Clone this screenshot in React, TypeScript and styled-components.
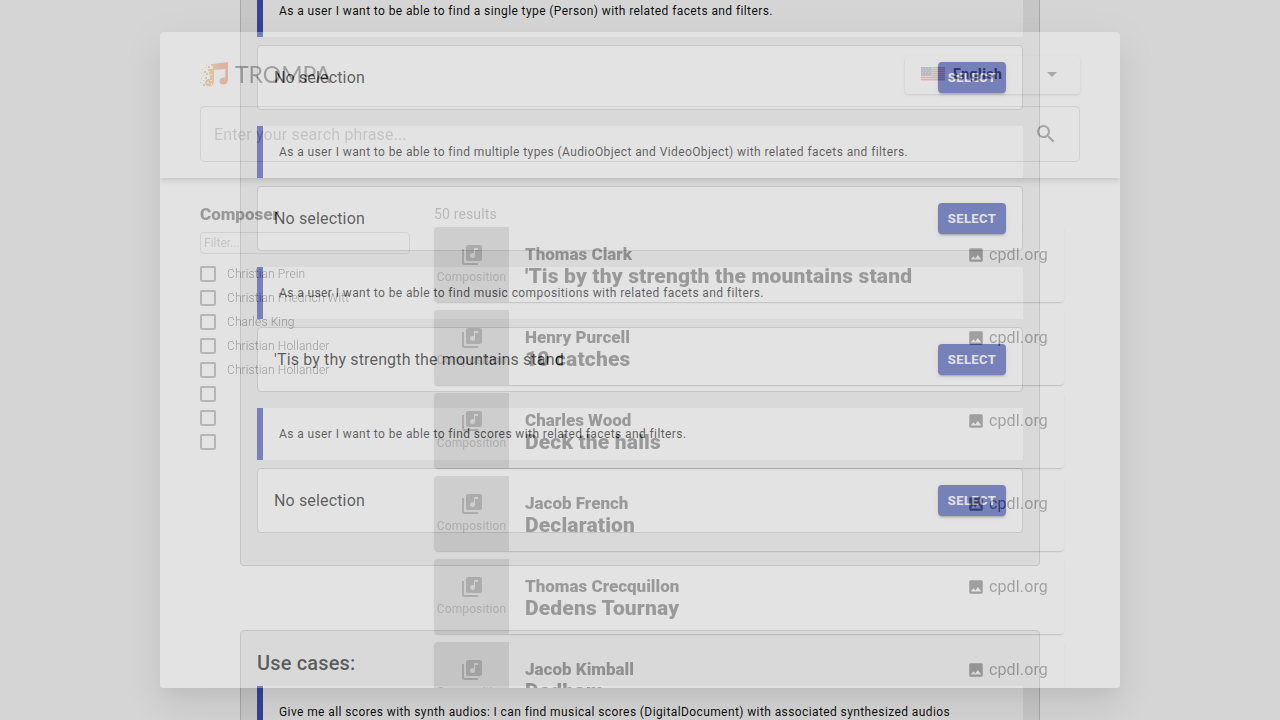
import React from 'react';
import styled, { createGlobalStyle } from 'styled-components';
import { MdArrowDropDown, MdImage, MdLibraryMusic, MdSearch } from 'react-icons/md';

const GlobalStyle = createGlobalStyle`
  *, *::before, *::after { box-sizing: border-box; }
  body {
    margin: 0;
    background: #fff;
    color: rgba(0, 0, 0, 0.95);
    font-family: Roboto, "Liberation Sans", sans-serif;
    overflow: hidden;
  }
  h1, h2, h3, p, ul { margin: 0; padding: 0; }
  ul { list-style: none; }
  button, input, select { font-family: inherit; }
`;

/* ---------- page behind the dialog ---------- */

const Page = styled.main`
  height: 100vh;
  overflow: hidden;
`;

const Column = styled.div`
  max-width: 800px;
  margin: 0 auto;
  display: flex;
  flex-direction: column;
  gap: 64px;
`;

const Panel = styled.section<{ $continued?: boolean }>`
  padding: ${(p) => (p.$continued ? '0 16px 32px' : '16px')};
  background: #eee;
  border: 1px solid #c8c8c8;
  border-top-width: ${(p) => (p.$continued ? '0' : '1px')};
  border-radius: ${(p) => (p.$continued ? '0 0 4px 4px' : '4px')};
`;

const PanelTitle = styled.h2`
  margin-bottom: 7px;
  font-size: 20px;
  font-weight: 500;
  line-height: 32px;
  letter-spacing: 0.0075em;
`;

const Stories = styled.div`
  display: flex;
  flex-direction: column;
  gap: 16px;
`;

const Story = styled.div`
  display: flex;
  flex-direction: column;
  gap: 8px;
`;

const StoryText = styled.p<{ $continued?: boolean }>`
  padding: ${(p) => (p.$continued ? '1px 16px 16px' : '16px')};
  background: #fff;
  border-left: 6px solid #3f51b5;
  font-size: 12px;
  line-height: 20px;
  letter-spacing: 0.03333em;
`;

const Selection = styled.div`
  display: flex;
  align-items: center;
  justify-content: space-between;
  padding: 16px;
  background: #fff;
  border: 1px solid #ccc;
  border-radius: 4px;
  font-size: 16px;
  line-height: 24px;
  letter-spacing: 0.00938em;
`;

const SelectButton = styled.button`
  width: 68px;
  height: 31px;
  padding: 0;
  border: 0;
  border-radius: 4px;
  background: #3f51b5;
  color: #fff;
  font-size: 13px;
  font-weight: 700;
  line-height: 22px;
  letter-spacing: 0.02857em;
  text-align: center;
  box-shadow: 0 3px 1px -2px rgba(0, 0, 0, 0.2), 0 2px 2px 0 rgba(0, 0, 0, 0.14),
    0 1px 5px 0 rgba(0, 0, 0, 0.12);
`;

/* ---------- dialog, part way through its fade-in ---------- */

const fade = 0.33;

const Backdrop = styled.div`
  position: fixed;
  inset: 0;
  background: rgba(0, 0, 0, 0.5);
  opacity: ${fade};
`;

const DialogLayer = styled.div`
  position: fixed;
  inset: 0;
  display: flex;
  justify-content: center;
  padding: 32px;
  opacity: ${fade};
`;

const Dialog = styled.div`
  flex: 1;
  max-width: 960px;
  display: flex;
  flex-direction: column;
  overflow: hidden;
  background: #fff;
  border-radius: 4px;
  color: rgba(0, 0, 0, 0.87);
  box-shadow: 0 11px 15px -7px rgba(0, 0, 0, 0.2), 0 24px 38px 3px rgba(0, 0, 0, 0.14),
    0 9px 46px 8px rgba(0, 0, 0, 0.12);
`;

const DialogHeader = styled.header`
  flex: none;
  z-index: 1;
  display: flex;
  flex-direction: column;
  gap: 12px;
  padding: 24px 40px 16px;
  background: #fff;
  box-shadow: 0 2px 4px -1px rgba(0, 0, 0, 0.2), 0 4px 5px 0 rgba(0, 0, 0, 0.14),
    0 1px 10px 0 rgba(0, 0, 0, 0.12);
`;

const HeaderRow = styled.div`
  display: flex;
  align-items: center;
  justify-content: space-between;
`;

const Brand = styled.h1`
  display: flex;
  align-items: center;
  gap: 5px;
  padding-bottom: 2px;
  font-family: Lato, sans-serif;
  font-size: 23px;
  font-weight: 400;
  line-height: 26px;
  color: #333;
`;

const LanguageField = styled.label`
  display: flex;
  align-items: center;
  gap: 8px;
  width: 175px;
  height: 38px;
  padding: 0 16px 2px;
  border-radius: 4px;
  box-shadow: 0 1px 3px rgba(0, 0, 0, 0.3);
`;

const LanguageSelect = styled.select`
  flex: 1;
  min-width: 0;
  padding: 0;
  border: 0;
  appearance: none;
  background: transparent;
  color: inherit;
  font-size: 14px;
  font-weight: 900;
  letter-spacing: 0.02857em;
`;

const CaretIcon = styled(MdArrowDropDown)`
  color: rgba(0, 0, 0, 0.7);
  font-size: 24px;
`;

const SearchBox = styled.div`
  display: flex;
  align-items: center;
  height: 56px;
  padding: 0 21px 0 13px;
  border: 1px solid rgba(0, 0, 0, 0.23);
  border-radius: 4px;
`;

const SearchInput = styled.input`
  flex: 1;
  min-width: 0;
  padding: 0;
  border: 0;
  background: transparent;
  font-size: 16px;
  letter-spacing: 0.00938em;
  &::placeholder { color: rgba(0, 0, 0, 0.38); opacity: 1; }
`;

const IconButton = styled.button`
  display: flex;
  padding: 0;
  border: 0;
  background: transparent;
  color: rgba(0, 0, 0, 0.75);
  font-size: 24px;
`;

const DialogBody = styled.div`
  flex: 1;
  min-height: 0;
  overflow: hidden;
  display: flex;
  align-items: flex-start;
  gap: 24px;
  padding: 24px 56px 0 40px;
`;

const Facet = styled.aside`
  flex: none;
  width: 210px;
`;

const FacetTitle = styled.h2`
  margin-bottom: 6px;
  font-size: 17px;
  font-weight: 900;
  line-height: 24px;
`;

const FacetFilter = styled.input`
  display: block;
  width: 100%;
  height: 22px;
  margin-bottom: 8px;
  padding: 0 3px;
  border: 1px solid rgba(0, 0, 0, 0.23);
  border-radius: 4px;
  background: transparent;
  font-size: 12px;
  &::placeholder { color: rgba(0, 0, 0, 0.38); opacity: 1; }
`;

const FacetOption = styled.label`
  display: flex;
  align-items: center;
  gap: 11px;
  height: 24px;
  font-size: 12px;
  font-weight: 300;
  letter-spacing: 0.00938em;
`;

const Checkbox = styled.input`
  appearance: none;
  width: 16px;
  height: 16px;
  margin: 0;
  border: 2px solid rgba(0, 0, 0, 0.54);
  border-radius: 2px;
`;

const Results = styled.section`
  flex: 1;
  min-width: 0;
`;

const ResultCount = styled.p`
  height: 25px;
  color: rgba(0, 0, 0, 0.54);
  font-size: 14px;
  line-height: 24px;
  letter-spacing: 0.01em;
`;

const ResultList = styled.ul`
  display: flex;
  flex-direction: column;
  gap: 8px;
`;

const ResultCard = styled.li`
  display: flex;
  height: 75px;
  overflow: hidden;
  border-radius: 4px;
  box-shadow: 0 2px 1px -1px rgba(0, 0, 0, 0.2), 0 1px 1px 0 rgba(0, 0, 0, 0.14),
    0 1px 3px 0 rgba(0, 0, 0, 0.12);
`;

const ResultKind = styled.div`
  flex: none;
  width: 75px;
  display: flex;
  flex-direction: column;
  align-items: center;
  justify-content: center;
  background: rgba(0, 0, 0, 0.25);
  color: rgba(0, 0, 0, 0.54);
  font-size: 12px;
  line-height: 20px;
  letter-spacing: 0.01em;
`;

const ResultText = styled.div`
  flex: 1;
  min-width: 0;
  padding: 16px;
`;

const Creator = styled.p`
  font-size: 17px;
  font-weight: 900;
  line-height: 22px;
`;

const WorkTitle = styled.h3`
  font-size: 21px;
  font-weight: 900;
  line-height: 22px;
  letter-spacing: 0.0075em;
`;

const Source = styled.a`
  display: flex;
  align-items: center;
  gap: 4px;
  height: 24px;
  margin: 16px 16px 0 0;
  color: rgba(0, 0, 0, 0.8);
  font-size: 16px;
  line-height: 24px;
  letter-spacing: 0.00938em;
  text-decoration: none;
`;

const stories = [
  { text: 'As a user I want to be able to find a single type (Person) with related facets and filters.', value: 'No selection' },
  { text: 'As a user I want to be able to find multiple types (AudioObject and VideoObject) with related facets and filters.', value: 'No selection' },
  { text: 'As a user I want to be able to find music compositions with related facets and filters.', value: "'Tis by thy strength the mountains stand" },
  { text: 'As a user I want to be able to find scores with related facets and filters.', value: 'No selection' },
];

const composers = ['Christian Prein', 'Christian Friedrich Witt', 'Charles King', 'Christian Hollander', 'Christian Hollander', '', '', ''];

const works = [
  { creator: 'Thomas Clark', title: "'Tis by thy strength the mountains stand" },
  { creator: 'Henry Purcell', title: '10 catches' },
  { creator: 'Charles Wood', title: 'Deck the halls' },
  { creator: 'Jacob French', title: 'Declaration' },
  { creator: 'Thomas Crecquillon', title: 'Dedens Tournay' },
  { creator: 'Jacob Kimball', title: 'Dedham' },
];

const specks: [number, number, number][] = [
  [2, 8, 1], [5, 6, 1], [8, 5, 2], [11, 3, 2], [1, 12, 1], [4, 10, 2], [8, 8, 2], [3, 14, 1],
  [6, 12, 2], [1, 17, 1], [9, 11, 3], [3, 19, 1], [5, 16, 2], [0, 21, 1], [3, 23, 2], [6, 4, 1],
];

const LogoMark = () => (
  <svg width="30" height="26" viewBox="0 0 30 26" aria-hidden="true">
    <defs>
      <linearGradient id="note" x1="0" x2="1" y1="0" y2="0">
        <stop offset="0" stopColor="#ee9a3c" />
        <stop offset="0.5" stopColor="#e9713f" />
      </linearGradient>
    </defs>
    <g fill="#eb9a34">
      {specks.map(([x, y, s]) => (
        <rect key={`${x}-${y}`} x={x} y={y} width={s} height={s} />
      ))}
      <path d="M10 8h4v13c0 3-2 4.500-4.500 4.500S5 24 5 21.800c0-2.300 2-4 5-4z" />
    </g>
    <path d="M7 21h2v1H7zM10 19h2v1h-2zM11 22h1v2h-1zM10 13h2v1h-2z" fill="#fff" />
    <path
      d="M13 3l15-2v18c0 2.600-2 4.500-4.500 4.500-2.300 0-4-1.300-4-3.300 0-2.500 2.400-4.200 5.800-3.700V8L13 9z"
      fill="url(#note)"
    />
  </svg>
);

const Flag = () => (
  <svg width="24" height="14" viewBox="0 0 24 14" aria-hidden="true">
    <rect width="24" height="14" fill="#eec0c6" />
    {[0, 2, 4, 6, 8, 10, 12].map((y) => (
      <rect key={y} y={y} width="24" height="1" fill="#d8707c" />
    ))}
    <rect width="10" height="8" fill="#7883a8" />
    <path d="M1 1h1v1H1zM4 1h1v1H4zM7 1h1v1H7zM2 3h1v1H2zM5 3h1v1H5zM8 3h1v1H8zM1 5h1v1H1zM4 5h1v1H4zM7 5h1v1H7z" fill="#b8c0d4" />
  </svg>
);

export default function App() {
  return (
    <>
      <GlobalStyle />
      <Page>
        <Column>
          <Panel $continued>
            <Stories>
              {stories.map((story, i) => (
                <Story key={story.text}>
                  <StoryText $continued={i === 0}>{story.text}</StoryText>
                  <Selection>
                    <span>{story.value}</span>
                    <SelectButton type="button">SELECT</SelectButton>
                  </Selection>
                </Story>
              ))}
            </Stories>
          </Panel>
          <Panel>
            <PanelTitle>Use cases:</PanelTitle>
            <StoryText>
              Give me all scores with synth audios: I can find musical scores (DigitalDocument) with associated synthesized audios
            </StoryText>
          </Panel>
        </Column>
      </Page>

      <Backdrop />
      <DialogLayer>
        <Dialog role="dialog" aria-label="Search">
          <DialogHeader>
            <HeaderRow>
              <Brand>
                <LogoMark />
                TROMPA
              </Brand>
              <LanguageField>
                <Flag />
                <LanguageSelect aria-label="Language" defaultValue="en">
                  <option value="en">English</option>
                </LanguageSelect>
                <CaretIcon />
              </LanguageField>
            </HeaderRow>
            <SearchBox>
              <SearchInput type="text" aria-label="Search phrase" placeholder="Enter your search phrase..." />
              <IconButton type="button" aria-label="Search">
                <MdSearch />
              </IconButton>
            </SearchBox>
          </DialogHeader>
          <DialogBody>
            <Facet>
              <FacetTitle>Composer</FacetTitle>
              <FacetFilter type="text" aria-label="Filter composers" placeholder="Filter..." />
              {composers.map((name, i) => (
                <FacetOption key={i}>
                  <Checkbox type="checkbox" />
                  {name}
                </FacetOption>
              ))}
            </Facet>
            <Results>
              <ResultCount>50 results</ResultCount>
              <ResultList>
                {works.map((work) => (
                  <ResultCard key={work.title}>
                    <ResultKind>
                      <MdLibraryMusic size={24} />
                      Composition
                    </ResultKind>
                    <ResultText>
                      <Creator>{work.creator}</Creator>
                      <WorkTitle>{work.title}</WorkTitle>
                    </ResultText>
                    <Source href="#cpdl">
                      <MdImage size={18} />
                      cpdl.org
                    </Source>
                  </ResultCard>
                ))}
              </ResultList>
            </Results>
          </DialogBody>
        </Dialog>
      </DialogLayer>
    </>
  );
}
